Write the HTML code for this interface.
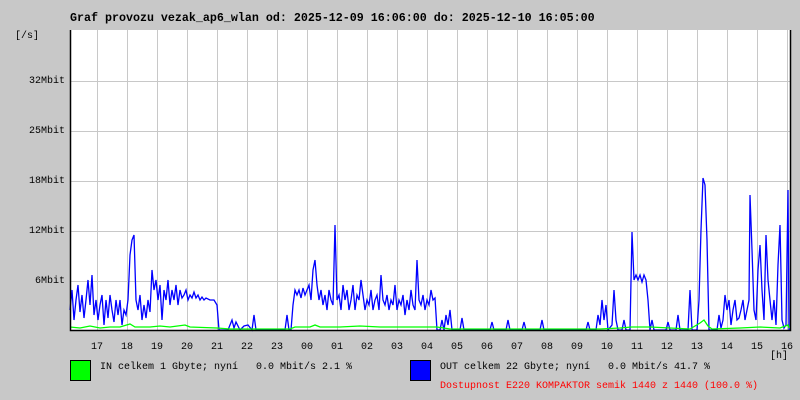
<!DOCTYPE html><html><head><style>
body{margin:0;width:800px;height:400px;background:#c8c8c8;overflow:hidden;font-family:"Liberation Mono","DejaVu Sans Mono",monospace}
.t{position:absolute;font-size:10px;white-space:pre;line-height:12px}
.h{position:absolute;font-size:10px;line-height:12px;top:342px;width:30px;text-align:center}
.y{position:absolute;font-size:10px;line-height:12px;left:0;width:65px;text-align:right}
</style></head><body>
<div class="t" style="left:70px;top:12px;font-weight:bold;font-size:11.67px">Graf provozu vezak_ap6_wlan od: 2025-12-09 16:06:00 do: 2025-12-10 16:05:00</div>
<div class="t" style="left:15px;top:31px">[/s]</div>
<div class="y" style="top:76px">32Mbit</div>
<div class="y" style="top:126px">25Mbit</div>
<div class="y" style="top:176px">18Mbit</div>
<div class="y" style="top:226px">12Mbit</div>
<div class="y" style="top:276px">6Mbit</div>
<svg style="position:absolute;left:0;top:0" width="800" height="400">
<rect x="70" y="30" width="720" height="300" fill="#fff"/>
<g stroke="#c8c8c8" stroke-width="1">
<path d="M97.5 30V330M127.5 30V330M157.5 30V330M187.5 30V330M217.5 30V330M247.5 30V330M277.5 30V330M307.5 30V330M337.5 30V330M367.5 30V330M397.5 30V330M427.5 30V330M457.5 30V330M487.5 30V330M517.5 30V330M547.5 30V330M577.5 30V330M607.5 30V330M637.5 30V330M667.5 30V330M697.5 30V330M727.5 30V330M757.5 30V330M787.5 30V330"/>
<path d="M70 81.5H790M70 131.5H790M70 181.5H790M70 231.5H790M70 281.5H790"/>
</g>
<polyline fill="none" stroke="#00f" stroke-width="1.3" points="70,310 72,290 74,320 76,300 78,285 80,312 82,295 84,318 86,300 88,280 90,305 92,275 94,315 96,300 98,320 100,305 102,295 104,325 106,300 108,318 110,295 112,310 114,322 116,300 118,315 120,300 122,325 124,310 126,315 128,300 130,255 132,240 134,235 136,300 138,310 140,295 142,320 144,305 146,318 148,300 150,312 152,270 154,290 156,280 158,300 160,285 162,320 164,290 166,300 168,280 170,305 172,290 174,300 176,285 178,305 180,290 182,298 184,295 186,290 188,300 190,295 192,298 194,292 196,298 198,295 200,300 202,297 204,300 206,298 210,300 214,300 217,305 219,330 228,330 230,325 232,320 234,328 236,322 240,330 244,326 248,325 252,330 254,315 256,330 285,330 287,315 289,330 291,330 293,305 295,290 297,295 299,290 301,298 303,288 305,295 307,290 309,285 311,300 313,270 315,260 317,285 319,300 321,290 323,305 325,295 327,310 329,290 331,300 333,305 335,225 337,300 339,295 341,310 343,285 345,300 347,290 349,310 351,300 353,285 355,310 357,295 359,300 361,280 363,295 365,310 367,300 369,305 371,290 373,310 375,300 377,295 379,310 381,275 383,300 385,305 387,295 389,310 391,300 393,305 395,285 397,310 399,300 401,305 403,295 405,315 407,300 409,310 411,290 413,305 415,310 417,260 419,300 421,305 423,295 425,310 427,300 429,305 431,290 433,300 435,298 437,330 440,330 442,320 444,330 446,315 448,325 450,310 452,330 460,330 462,318 464,330 490,330 492,322 494,330 506,330 508,320 510,330 522,330 524,322 526,330 540,330 542,320 544,330 586,330 588,322 590,330 596,330 598,315 600,325 602,300 604,320 606,305 608,330 612,325 614,290 616,320 618,330 622,330 624,320 626,330 630,330 632,232 634,280 636,275 638,280 640,275 642,282 644,275 646,280 648,300 650,330 652,320 654,330 666,330 668,322 670,330 676,330 678,315 680,330 688,330 690,290 692,330 697,330 699,300 701,230 703,178 705,185 707,240 709,330 717,330 719,315 721,328 723,320 725,295 727,310 729,300 731,325 733,310 735,300 737,320 739,318 741,310 743,300 745,320 747,310 749,300 750,195 752,250 754,310 756,320 758,270 760,245 762,290 764,320 766,235 768,280 770,300 772,320 774,300 776,325 778,265 780,225 782,320 784,328 786,325 788,190 789,330"/>
<polyline fill="none" stroke="#0f0" stroke-width="1.3" points="70,327 80,328 90,326 100,328 110,327 120,327 130,324 135,327 150,327 160,326 170,327 185,325 190,327 217,328 230,329 290,329 295,327 310,327 315,325 320,327 340,327 360,326 380,327 400,327 420,327 437,327 450,329 600,329 620,328 632,327 650,327 690,329 700,323 704,320 708,326 712,329 740,328 760,327 780,328 788,325 789,328"/>
<path d="M70.5 30V330.5H790.5V30" fill="none" stroke="#000" stroke-width="1.5"/>
<rect x="70.5" y="360.5" width="20" height="20" fill="#0f0" stroke="#000"/>
<rect x="410.5" y="360.5" width="20" height="20" fill="#00f" stroke="#000"/>
</svg>
<div class="h" style="left:82px">17</div><div class="h" style="left:112px">18</div><div class="h" style="left:142px">19</div><div class="h" style="left:172px">20</div><div class="h" style="left:202px">21</div><div class="h" style="left:232px">22</div><div class="h" style="left:262px">23</div><div class="h" style="left:292px">00</div><div class="h" style="left:322px">01</div><div class="h" style="left:352px">02</div><div class="h" style="left:382px">03</div><div class="h" style="left:412px">04</div><div class="h" style="left:442px">05</div><div class="h" style="left:472px">06</div><div class="h" style="left:502px">07</div><div class="h" style="left:532px">08</div><div class="h" style="left:562px">09</div><div class="h" style="left:592px">10</div><div class="h" style="left:622px">11</div><div class="h" style="left:652px">12</div><div class="h" style="left:682px">13</div><div class="h" style="left:712px">14</div><div class="h" style="left:742px">15</div><div class="h" style="left:772px">16</div>
<div class="t" style="left:770px;top:351px">[h]</div>
<div class="t" style="left:100px;top:362px">IN celkem 1 Gbyte; nyní   0.0 Mbit/s 2.1 %</div>
<div class="t" style="left:440px;top:362px">OUT celkem 22 Gbyte; nyní   0.0 Mbit/s 41.7 %</div>
<div class="t" style="left:440px;top:381px;color:#f00">Dostupnost E220 KOMPAKTOR semik 1440 z 1440 (100.0 %)</div>
</body></html>
